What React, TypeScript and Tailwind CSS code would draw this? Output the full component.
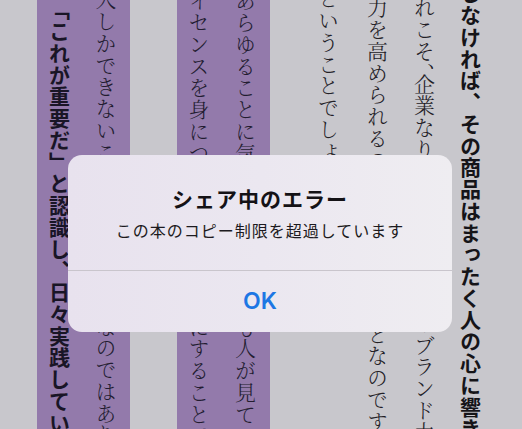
import type { ReactNode } from 'react';

// one vertical line of book text
function Col({ w, mt, bold, tone, children }: { w: string; mt: string; bold?: boolean; tone?: string; children: ReactNode }) {
  const face = bold
    ? "font-bold font-['Noto_Sans_CJK_JP',sans-serif]"
    : "font-light font-['Noto_Serif_CJK_JP','Noto_Sans_CJK_JP',serif]";
  return (
    <div className={`flex justify-center items-start overflow-hidden h-full ${w}`}>
      <div className={`[writing-mode:vertical-rl] whitespace-nowrap leading-none text-[21px] tracking-[0.75px] ${mt} ${face} ${tone ?? 'text-[#222026]'}`}>
        {children}
      </div>
    </div>
  );
}

export default function App() {
  return (
    <div className="relative w-[522px] h-[429px] overflow-hidden bg-[#c8c7cc]">
      <div className="flex h-full">
        <div className="w-[37px] shrink-0" />
        <div className="flex shrink-0 w-[93px] bg-[#937aab]">
          <Col w="w-[44px]" mt="-mt-[1px]" bold tone="text-[#191526]">「これが重要だ」と認識し、日々実践している</Col>
          <Col w="w-[49px]" mt="-mt-[11px]" tone="text-[#221c30]">人しかできないこと、それが大切なのではありません</Col>
        </div>
        <div className="w-[47px] shrink-0" />
        <div className="flex shrink-0 w-[93px] bg-[#937aab]">
          <Col w="w-[43px]" mt="-mt-[10px]" tone="text-[#221c30]">イセンスを身につけ、それを大切にすることで</Col>
          <Col w="w-[50px]" mt="-mt-[10px]" tone="text-[#221c30]">あらゆることに気を配り、いつでも人が見ている</Col>
        </div>
        <div className="w-[34px] shrink-0" />
        <Col w="w-[48px] shrink-0" mt="-mt-[12px]">ということでしょう。</Col>
        <Col w="w-[50px] shrink-0" mt="-mt-[3px]">力を高められるのは、こうしたことなのです。</Col>
        <Col w="w-[44px] shrink-0" mt="-mt-[3px]">
          れこそ<span className="tracking-[-10px]">、</span>企業なり商品なりの本当のブランド力
        </Col>
        <Col w="w-[48px] shrink-0" mt="-mt-[17px]" bold tone="text-[#151418]">しなければ、その商品はまったく人の心に響きません</Col>
      </div>

      <div className="absolute left-[68px] top-[155px] w-[384px] h-[177px] rounded-[14px] bg-gradient-to-r from-[#e8e2ee] via-[#ebe7f0] to-[#efedf1] flex flex-col overflow-hidden">
        <div className="h-[115px] flex flex-col items-center pt-[30px] font-['Noto_Sans_CJK_JP',sans-serif]">
          <div className="text-[21px] leading-[26px] tracking-[1px] font-bold text-[#141216]">シェア中のエラー</div>
          <div className="mt-[8px] text-[16px] leading-[22px] tracking-[1px] text-[#1c1a20]">この本のコピー制限を超過しています</div>
        </div>
        <div className="flex-1 border-t border-[#c9c5cc] flex items-center justify-center">
          <span className="font-['Inter',sans-serif] font-semibold text-[23px] text-[#1d77e4]">OK</span>
        </div>
      </div>
    </div>
  );
}
